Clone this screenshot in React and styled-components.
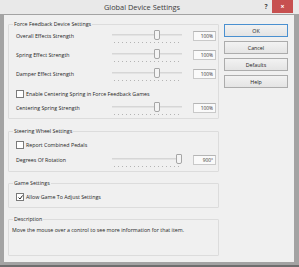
import React from 'react';
import styled, { createGlobalStyle } from 'styled-components';

const GlobalStyle = createGlobalStyle`
  html, body {
    margin: 0;
    padding: 0;
    background: #7a7a7a;
  }
  body {
    font-family: "Open Sans", "Noto Sans", sans-serif;
    font-size: 5.3px;
    color: #1e1e1e;
  }
`;

const Window = styled.div`
  width: 299px;
  height: 267px;
  display: flex;
  flex-direction: column;
  background: #a3a3a3;
  overflow: hidden;
`;

const TitleBar = styled.div`
  height: 14px;
  display: flex;
  align-items: flex-start;
  background: #e9e9e9;
`;

const Title = styled.div`
  flex: 1;
  text-align: center;
  font-size: 7.4px;
  line-height: 15px;
  color: #3c3c3c;
  padding-left: 24px;
`;

const HelpGlyph = styled.div`
  width: 12px;
  font-size: 6.5px;
  line-height: 12px;
  font-weight: bold;
  color: #444;
  text-align: center;
  margin-top: 1px;
`;

const CloseButton = styled.div`
  width: 21px;
  height: 13px;
  margin-right: 6px;
  background: #c75050;
  color: #fff;
  font-size: 7px;
  font-weight: bold;
  display: flex;
  align-items: center;
  justify-content: center;
`;

const Frame = styled.div`
  flex: 1;
  padding: 1px 5px 3px 4px;
  display: flex;
  flex-direction: column;
`;

const Face = styled.div`
  flex: 1;
  background: #f0f0f0;
  display: flex;
  gap: 5px;
  padding: 6px 6px 6px 4px;
`;

const LeftColumn = styled.div`
  width: 211px;
  display: flex;
  flex-direction: column;
  gap: 8px;
`;

const Group = styled.fieldset`
  margin: 0;
  margin-top: ${p => p.$mt || 0}px;
  padding: 0 0 0 7px;
  border: 1px solid #dcdcdc;
  border-radius: 1px;
  height: ${p => p.$h}px;
  box-sizing: border-box;
  display: flex;
  flex-direction: column;
`;

const Legend = styled.legend`
  padding: 0 1px;
  margin-left: -3px;
  line-height: 6px;
  color: #1e1e1e;
`;

const Row = styled.div`
  height: ${p => p.$h}px;
  margin-top: ${p => p.$mt || 0}px;
  display: flex;
  align-items: center;
`;

const Label = styled.div`
  width: 96px;
`;

const Slider = styled.div`
  width: 70px;
  height: 16px;
  position: relative;
  margin-right: 11px;
`;

const Track = styled.div`
  position: absolute;
  left: 0;
  right: 0;
  top: 6px;
  height: 1px;
  background: #d6d6d6;
  border-bottom: 1px solid #e3e3e3;
`;

const Ticks = styled.div`
  position: absolute;
  left: 2px;
  right: 1px;
  top: 14px;
  height: 1px;
  background-image: linear-gradient(to right, #b4b4b4 1px, transparent 1px);
  background-size: 4px 1px;
`;

const Thumb = styled.div`
  position: absolute;
  top: 2px;
  width: 4px;
  height: 8px;
  background: #f4f4f4;
  border: 1px solid #a6a6a6;
  border-radius: 1px 1px 2px 2px;
`;

const ValueBox = styled.div`
  width: 23px;
  height: 10px;
  box-sizing: border-box;
  border: 1px solid #c9c9c9;
  border-top-color: #b5b5b5;
  background: #fafafa;
  text-align: right;
  padding-right: 2px;
  line-height: 8px;
  font-size: 4.8px;
  color: #333;
`;

const CheckRow = styled.div`
  height: ${p => p.$h}px;
  margin-top: ${p => p.$mt || 0}px;
  display: flex;
  align-items: center;
  gap: 2px;
`;

const Box = styled.div`
  width: 6px;
  height: 6px;
  border: 1px solid #7a7a7a;
  background: #fff;
  display: flex;
  align-items: center;
  justify-content: center;
`;

const DescText = styled.div`
  margin-left: -4px;
  padding-top: 4px;
`;

const ButtonColumn = styled.div`
  width: 64px;
  display: flex;
  flex-direction: column;
  gap: 4px;
  padding-top: 3px;
`;

const Button = styled.div`
  height: 13px;
  box-sizing: border-box;
  border: 1px solid ${p => (p.$default ? '#4a90d0' : '#acacac')};
  background: linear-gradient(#f2f2f2, #e4e4e4);
  display: flex;
  align-items: center;
  justify-content: center;
  color: #222;
`;

const BottomStrip = styled.div`
  height: 2px;
  background: #6e6e6e;
`;

const SliderRow = ({ label, pos, value, h = 19, mt }) => (
  <Row $h={h} $mt={mt}>
    <Label>{label}</Label>
    <Slider>
      <Track />
      <Ticks />
      <Thumb style={{ left: pos }} />
    </Slider>
    <ValueBox>{value}</ValueBox>
  </Row>
);

const Check = ({ label, checked, h, mt }) => (
  <CheckRow $h={h} $mt={mt}>
    <Box>
      {checked && (
        <svg width="5" height="5" viewBox="0 0 10 10">
          <path d="M1 5 L4 8 L9 1" stroke="#222" strokeWidth="2" fill="none" />
        </svg>
      )}
    </Box>
    {label}
  </CheckRow>
);

export default function App() {
  return (
    <Window>
      <GlobalStyle />
      <TitleBar>
        <Title>Global Device Settings</Title>
        <HelpGlyph>?</HelpGlyph>
        <CloseButton>×</CloseButton>
      </TitleBar>
      <Frame>
        <Face>
          <LeftColumn>
            <Group $h={98}>
              <Legend>Force Feedback Device Settings</Legend>
              <SliderRow label="Overall Effects Strength" pos={42} value="100%" h={18} />
              <SliderRow label="Spring Effect Strength" pos={42} value="100%" h={19} />
              <SliderRow label="Damper Effect Strength" pos={42} value="100%" h={20} />
              <Check label="Enable Centering Spring in Force Feedback Games" h={10} mt={5} />
              <SliderRow label="Centering Spring Strength" pos={42} value="100%" h={17} />
            </Group>
            <Group $h={44} $mt={1}>
              <Legend>Steering Wheel Settings</Legend>
              <Check label="Report Combined Pedals" h={14} mt={4} />
              <SliderRow label="Degrees Of Rotation" pos={64} value="900°" h={16} />
            </Group>
            <Group $h={28}>
              <Legend>Game Settings</Legend>
              <Check label="Allow Game To Adjust Settings" checked h={14} mt={4} />
            </Group>
            <Group $h={40}>
              <Legend>Description</Legend>
              <DescText>Move the mouse over a control to see more information for that item.</DescText>
            </Group>
          </LeftColumn>
          <ButtonColumn>
            <Button $default>OK</Button>
            <Button>Cancel</Button>
            <Button>Defaults</Button>
            <Button>Help</Button>
          </ButtonColumn>
        </Face>
      </Frame>
      <BottomStrip />
    </Window>
  );
}
